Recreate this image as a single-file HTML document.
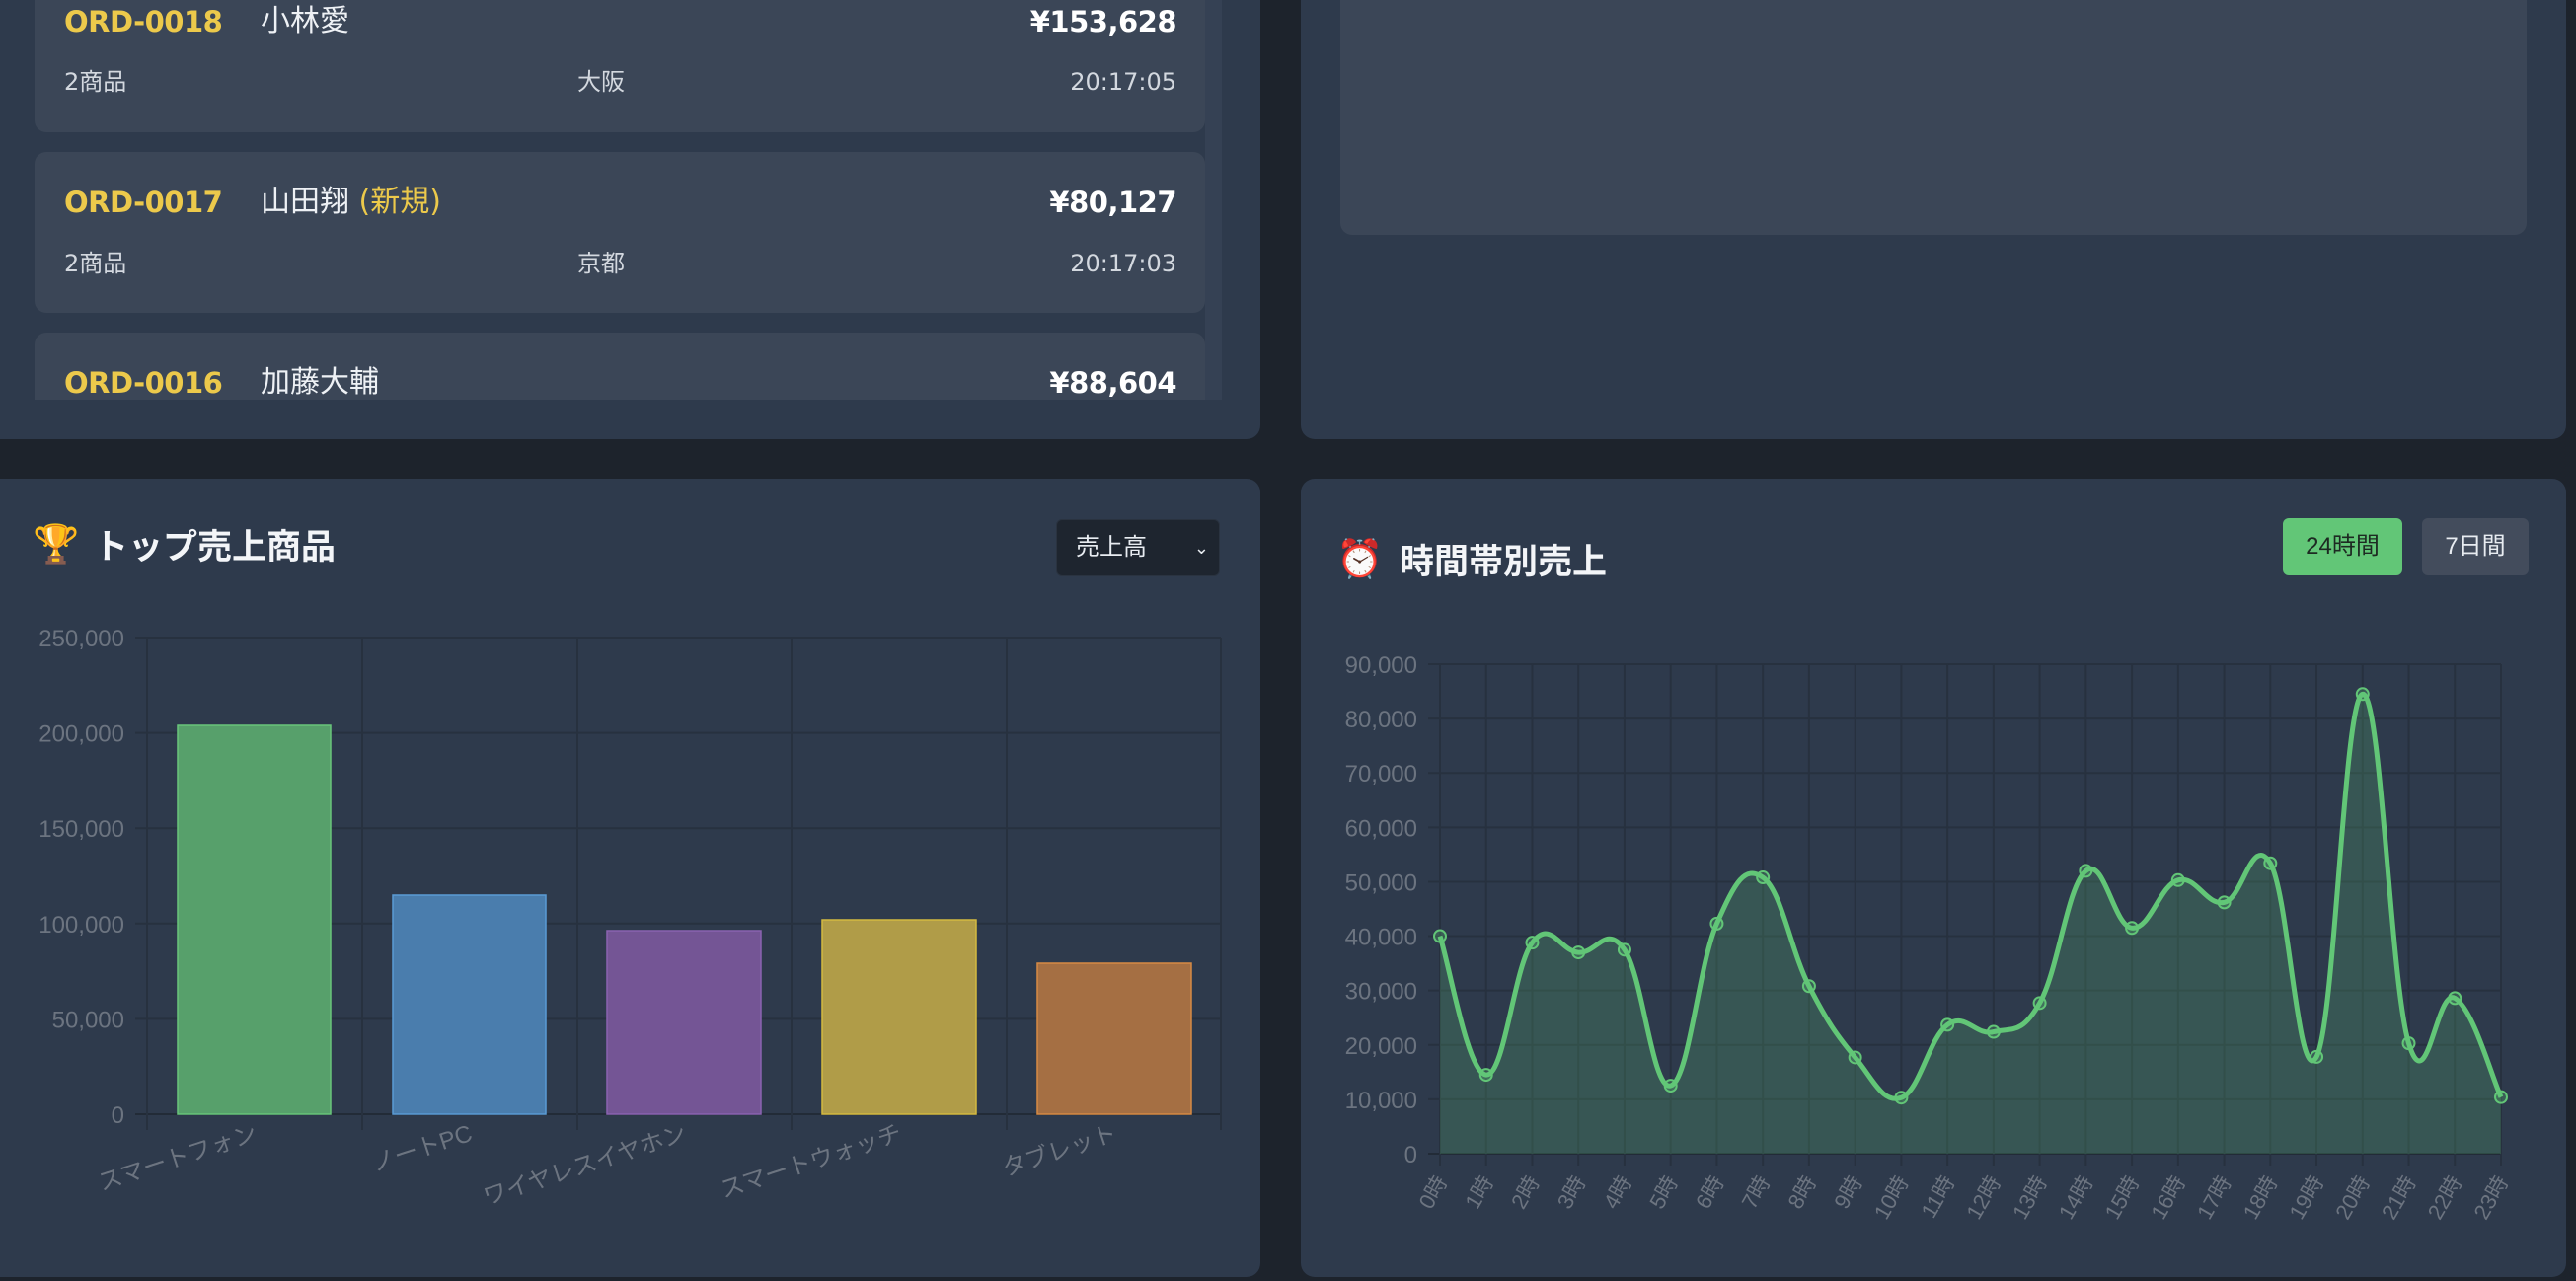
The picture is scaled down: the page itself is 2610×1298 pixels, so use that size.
<!DOCTYPE html>
<html><head><meta charset="utf-8"><style>
*{margin:0;padding:0;box-sizing:border-box}
body{width:2610px;height:1298px;background:#1d232c;overflow:hidden;position:relative;font-family:"Liberation Sans","Noto Sans CJK JP",sans-serif;color:#e8ecf1}
.panel{position:absolute;background:#2e3a4c;border-radius:14px}
.card{position:absolute;left:35px;width:1186px;background:#3b4657;border-radius:12px}
.t{position:absolute;font-size:30px;white-space:nowrap;line-height:1;font-family:"DejaVu Sans","Noto Sans CJK JP",sans-serif}
.ord{color:#ecc94b;font-weight:bold;left:30px;font-size:29px;letter-spacing:-0.5px}
.nm{left:229px;color:#eef1f5}
.amt{right:29px;font-weight:bold;color:#fff;font-size:29px;letter-spacing:-0.5px}
.s{position:absolute;font-size:24px;color:#d3d8df;line-height:1;white-space:nowrap;font-family:"DejaVu Sans","Noto Sans CJK JP",sans-serif}
svg text{font-family:"Liberation Sans","Noto Sans CJK JP",sans-serif}
</style></head><body>
<div class="panel" style="left:-20px;top:-30px;width:1297px;height:475px"></div>
<div style="position:absolute;left:35px;top:0;width:1203px;height:405px;overflow:hidden">
 <div style="position:absolute;left:1186px;top:0;width:17px;height:405px;background:#354154"></div>
 <div class="card" style="left:0;top:-40px;height:174px">
  <div class="t ord" style="top:48px">ORD-0018</div><div class="t nm" style="top:47px">小林愛</div><div class="t amt" style="top:48px">¥153,628</div>
  <div class="s" style="left:30px;top:111px">2商品</div><div class="s" style="left:550px;top:111px">大阪</div><div class="s" style="right:29px;top:111px">20:17:05</div>
 </div>
 <div class="card" style="left:0;top:154px;height:163px">
  <div class="t ord" style="top:37px">ORD-0017</div><div class="t nm" style="top:36px">山田翔 <span style="color:#ecc94b">(新規)</span></div><div class="t amt" style="top:37px">¥80,127</div>
  <div class="s" style="left:30px;top:101px">2商品</div><div class="s" style="left:550px;top:101px">京都</div><div class="s" style="right:29px;top:101px">20:17:03</div>
 </div>
 <div class="card" style="left:0;top:337px;height:163px">
  <div class="t ord" style="top:37px">ORD-0016</div><div class="t nm" style="top:36px">加藤大輔</div><div class="t amt" style="top:37px">¥88,604</div>
 </div>
</div>
<div class="panel" style="left:1318px;top:-30px;width:1282px;height:475px"></div>
<div style="position:absolute;left:1358px;top:-20px;width:1202px;height:258px;background:#3b4657;border-radius:12px"></div>

<div class="panel" style="left:-20px;top:485px;width:1297px;height:809px"></div>
<div style="position:absolute;left:33px;top:533px;font-size:38px;line-height:1">🏆</div>
<div style="position:absolute;left:95px;top:537px;font-size:35px;font-weight:bold;line-height:1;color:#f3f5f8">トップ売上商品</div>
<div style="position:absolute;left:1070px;top:526px;width:166px;height:58px;background:#1e252f;border-radius:6px;border:1px solid #2a3340;font-size:24px;line-height:56px;padding-left:19px;color:#e8ecf1">売上高<span style="position:absolute;right:10px;top:0;font-size:18px">&#8964;</span></div>
<svg style="position:absolute;left:0;top:0" width="1300" height="1298" id="bar"></svg>

<div class="panel" style="left:1318px;top:485px;width:1282px;height:809px"></div>
<div style="position:absolute;left:1354px;top:548px;font-size:38px;line-height:1">⏰</div>
<div style="position:absolute;left:1418px;top:552px;font-size:35px;font-weight:bold;line-height:1;color:#f3f5f8">時間帯別売上</div>
<div style="position:absolute;left:2313px;top:525px;width:121px;height:58px;background:#62c677;border-radius:6px;font-size:24px;line-height:58px;text-align:center;color:#1d2a22">24時間</div>
<div style="position:absolute;left:2454px;top:525px;width:108px;height:58px;background:#434c5c;border-radius:6px;font-size:24px;line-height:58px;text-align:center;color:#e8ecf1">7日間</div>
<svg style="position:absolute;left:0;top:0" width="2610" height="1298" id="line"></svg>

<script>
var NS='http://www.w3.org/2000/svg';
function el(svg,tag,a,txt){var e=document.createElementNS(NS,tag);for(var k in a)e.setAttribute(k,a[k]);if(txt!==undefined)e.textContent=txt;svg.appendChild(e);return e;}
var b=document.getElementById('bar');
var x0=149,x1=1237,yt=646,yb=1129;
for(var i=0;i<=5;i++){var y=yb-(yb-yt)*i/5;el(b,'line',{x1:x0-12,y1:y,x2:x1,y2:y,stroke:i==0?'#222b37':'#27313f','stroke-width':2});
el(b,'text',{x:126,y:y+9,'text-anchor':'end','font-size':24,fill:'#6c7480'},i==0?'0':(i*50)+',000');}
var vx=[149,367,585,802,1020,1237];
vx.forEach(function(x){el(b,'line',{x1:x,y1:yt,x2:x,y2:1145,stroke:'#27313f','stroke-width':2});});
var bars=[[180,335,735,'#57a06b','#68c57b'],[398,553,907,'#4a7dad','#5a9bd5'],[615,771,943,'#745595','#8a63b0'],[833,989,932,'#b09c48','#d4b940'],[1051,1207,976,'#a56f43','#d68a44']];
bars.forEach(function(r){el(b,'rect',{x:r[0],y:r[2],width:r[1]-r[0],height:yb-r[2],fill:r[3],stroke:r[4],'stroke-width':1.5});});
var labs=['スマートフォン','ノートPC','ワイヤレスイヤホン','スマートウォッチ','タブレット'];
[262,480,697,915,1133].forEach(function(cx,i){var cy=1155;el(b,'text',{x:cx,y:cy,'text-anchor':'end','font-size':24,fill:'#6c7480',transform:'rotate(-18 '+cx+' '+cy+')'},labs[i]);});
var s=document.getElementById('line');
var X0=1459,X1=2534,Y0=673,Y1=1169;
for(var i=0;i<=9;i++){var y=Y1-(Y1-Y0)*i/9;el(s,'line',{x1:X0-12,y1:y,x2:X1,y2:y,stroke:i==0?'#222b37':'#27313f','stroke-width':2});
el(s,'text',{x:1436,y:y+9,'text-anchor':'end','font-size':24,fill:'#6c7480'},i==0?'0':(i*10)+',000');}
var v=[40000,14500,38800,37000,37500,12500,42300,50800,30800,17700,10300,23700,22400,27700,52000,41500,50300,46200,53400,17800,84500,20300,28600,10400];
var dx=(X1-X0)/23,P=v.map(function(val,i){return [X0+i*dx,Y1-(Y1-Y0)*val/90000];});
for(var i=0;i<24;i++){var x=X0+i*dx;el(s,'line',{x1:x,y1:Y0,x2:x,y2:Y1+12,stroke:'#27313f','stroke-width':2});
el(s,'text',{x:x+8,y:Y1+28,'text-anchor':'end','font-size':22,fill:'#6c7480',transform:'rotate(-60 '+(x+8)+' '+(Y1+28)+')'},i+'時');}
var t=0.4,d='M'+P[0][0]+' '+P[0][1];
for(var i=0;i<23;i++){var p0=P[Math.max(i-1,0)],p1=P[i],p2=P[i+1],p3=P[Math.min(i+2,23)];
var c1=[p1[0]+(p2[0]-p0[0])*t/2,p1[1]+(p2[1]-p0[1])*t/2],c2=[p2[0]-(p3[0]-p1[0])*t/2,p2[1]-(p3[1]-p1[1])*t/2];
d+=' C'+c1[0]+' '+c1[1]+' '+c2[0]+' '+c2[1]+' '+p2[0]+' '+p2[1];}
el(s,'path',{d:d+' L'+X1+' '+Y1+' L'+X0+' '+Y1+' Z',fill:'rgba(95,200,120,0.2)'});
el(s,'path',{d:d,fill:'none',stroke:'#62c677','stroke-width':5});
P.forEach(function(p){el(s,'circle',{cx:p[0],cy:p[1],r:6,fill:'rgba(95,200,120,0.25)',stroke:'#62c677','stroke-width':2});});
</script>
</body></html>
